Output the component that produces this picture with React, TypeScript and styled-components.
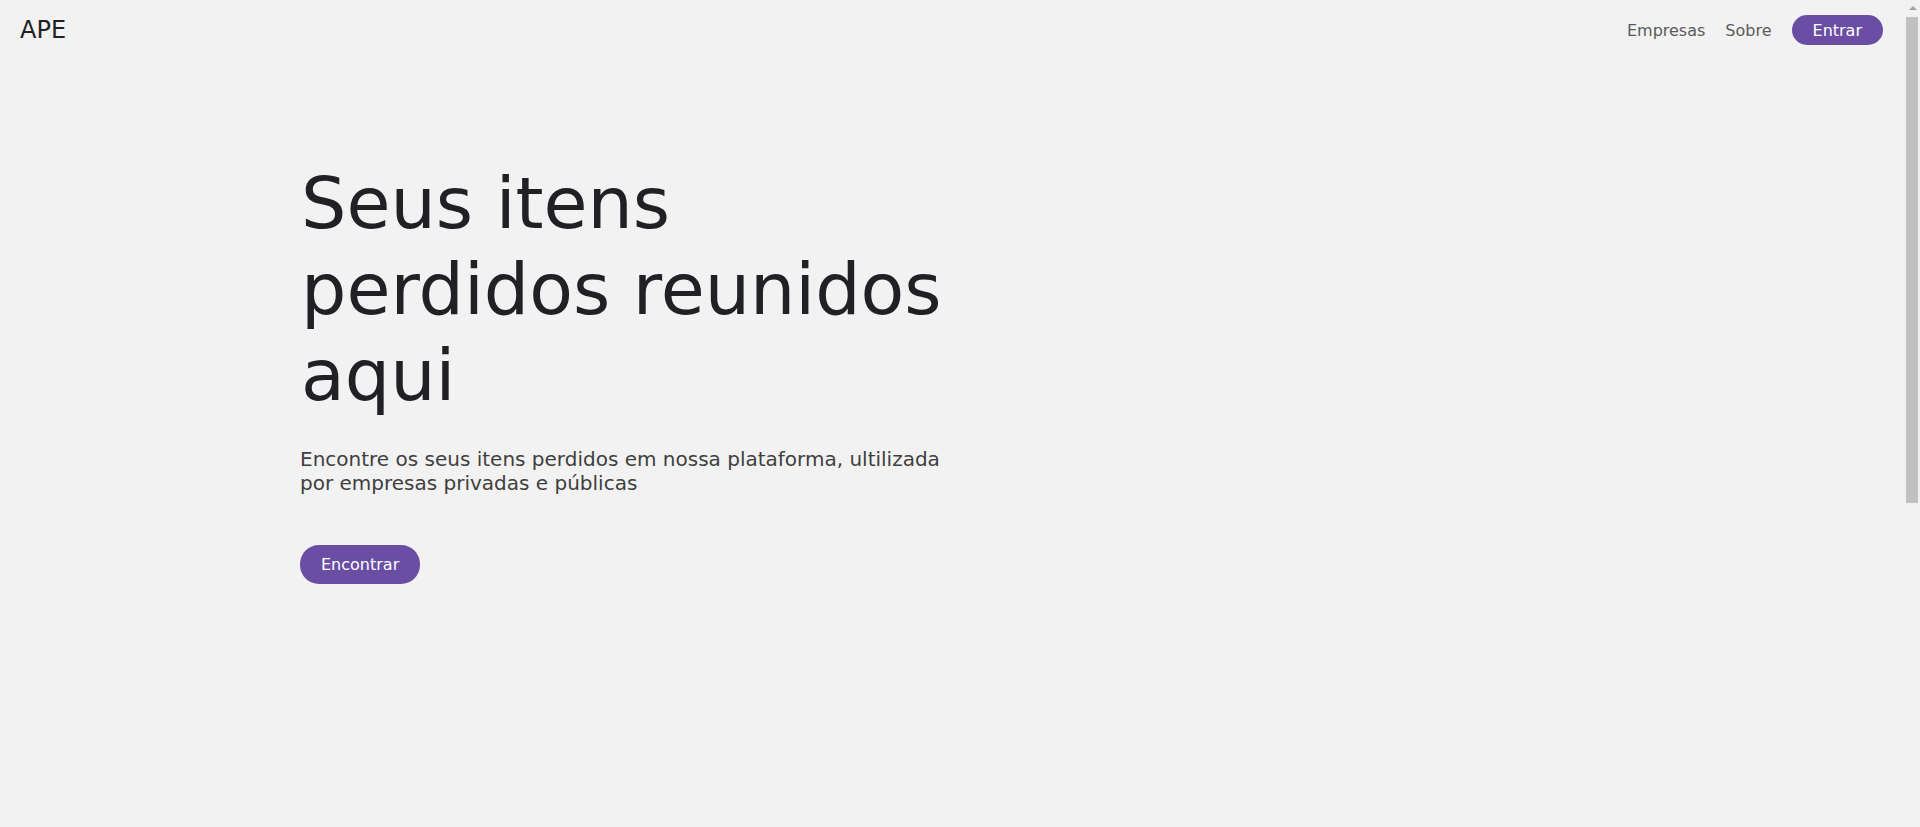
import React from "react";
import styled, { createGlobalStyle } from "styled-components";

const GlobalStyle = createGlobalStyle`
  html, body {
    margin: 0;
    padding: 0;
    background: #f2f2f2;
  }
  body {
    font-family: "DejaVu Sans", "Liberation Sans", Arial, sans-serif;
    color: #212125;
  }
  * { box-sizing: border-box; }
`;

const Page = styled.div`
  min-height: 1356px;
  padding-right: 15px;
  background: #f2f2f2;
  display: flex;
  flex-direction: column;
`;

const NavBar = styled.header`
  height: 60px;
  padding: 0 22px 0 20px;
  display: flex;
  align-items: center;
  justify-content: space-between;
`;

const Brand = styled.a`
  font-size: 24px;
  color: #212125;
  text-decoration: none;
  margin-top: -1px;
`;

const NavLinks = styled.nav`
  display: flex;
  align-items: center;
  gap: 20px;
`;

const NavLink = styled.a`
  font-size: 16px;
  color: #5b5b5b;
  text-decoration: none;
`;

const PillButton = styled.button<{ $size?: "sm" | "md" }>`
  border: none;
  background: #6a4ea4;
  color: #ffffff;
  font-family: inherit;
  font-size: 16px;
  font-weight: 400;
  border-radius: ${(p) => (p.$size === "sm" ? "15px" : "19px")};
  height: ${(p) => (p.$size === "sm" ? "30px" : "39px")};
  padding: 0 21px;
  display: inline-flex;
  align-items: center;
  justify-content: center;
  cursor: pointer;
`;

const Hero = styled.main`
  padding: 101px 0 0 300px;
  display: flex;
  flex-direction: column;
  align-items: flex-start;
`;

const Headline = styled.h1`
  margin: 0 0 0 1px;
  font-size: 71.5px;
  font-weight: 400;
  line-height: 86px;
  color: #212125;
`;

const Lead = styled.p`
  margin: 28px 0 0;
  font-size: 20px;
  line-height: 24px;
  color: #3f3f3f;
`;

const ButtonRow = styled.div`
  margin-top: 50px;
`;

/* Browser scrollbar drawn over the right edge of the viewport */
const ScrollTrack = styled.div`
  position: fixed;
  top: 0;
  right: 0;
  width: 15px;
  height: 100vh;
  background: #f1f1f1;
  display: flex;
  flex-direction: column;
  align-items: stretch;
`;

const ScrollArrow = styled.div`
  height: 17px;
  display: flex;
  align-items: center;
  justify-content: center;
  padding-bottom: 2px;
`;

const ScrollThumb = styled.div`
  height: 486px;
  margin: 0 2px 0 1px;
  background: #c1c1c1;
`;

export default function App() {
  return (
    <>
      <GlobalStyle />
      <Page>
        <NavBar>
          <Brand href="#">APE</Brand>
          <NavLinks>
            <NavLink href="#">Empresas</NavLink>
            <NavLink href="#">Sobre</NavLink>
            <PillButton $size="sm">Entrar</PillButton>
          </NavLinks>
        </NavBar>
        <Hero>
          <Headline>
            Seus itens
            <br />
            perdidos reunidos
            <br />
            aqui
          </Headline>
          <Lead>
            Encontre os seus itens perdidos em nossa plataforma, ultilizada
            <br />
            por empresas privadas e públicas
          </Lead>
          <ButtonRow>
            <PillButton $size="md">Encontrar</PillButton>
          </ButtonRow>
        </Hero>
      </Page>
      <ScrollTrack aria-hidden="true">
        <ScrollArrow>
          <svg width="8" height="4" viewBox="0 0 8 4">
            <polygon points="0,4 4,0 8,4" fill="#a3a3a3" />
          </svg>
        </ScrollArrow>
        <ScrollThumb />
      </ScrollTrack>
    </>
  );
}
